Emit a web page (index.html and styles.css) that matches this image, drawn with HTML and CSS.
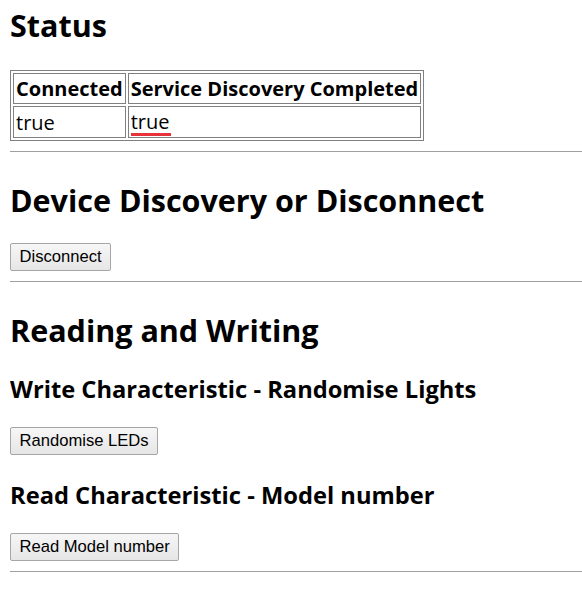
FILE: index.html
```html
<!DOCTYPE html>
<html>
<head>
<meta charset="utf-8">
<link rel="stylesheet" href="styles.css">
</head>
<body>
<h1 class="title first">Status</h1>
<table class="status">
  <tr><th>Connected</th><th>Service Discovery Completed</th></tr>
  <tr><td>true</td><td><span class="spell">true</span></td></tr>
</table>
<hr class="rule">
<h1 class="title">Device Discovery or Disconnect</h1>
<div class="actions"><button class="btn">Disconnect</button></div>
<hr class="rule">
<h1 class="title">Reading and Writing</h1>
<h2 class="sub">Write Characteristic - Randomise Lights</h2>
<div class="actions"><button class="btn">Randomise LEDs</button></div>
<h2 class="sub">Read Characteristic - Model number</h2>
<div class="actions"><button class="btn">Read Model number</button></div>
<hr class="rule">
</body>
</html>
```
FILE: styles.css
```css
html, body { background: #fff; }
body {
  margin: 0 0 0 10px;
  font-family: "Open Sans", "Noto Sans", sans-serif;
  color: #000;
}
.title {
  font-size: 30.5px;
  font-weight: 700;
  line-height: 42px;
  margin: 27px 0 22px;
}
.title.first { margin-top: 4px; margin-bottom: 24px; }
.sub {
  font-size: 23.7px;
  font-weight: 700;
  line-height: 32px;
  margin: 24px 0 22px;
}
.title + .sub { margin-top: 22px; }
.status {
  border: 1px solid #808080;
  border-spacing: 2px;
  border-collapse: separate;
  font-size: 20px;
}
.status th, .status td {
  border: 1px solid #808080;
  padding: 1px 2px;
  text-align: left;
  line-height: 27px;
}
.status th { font-weight: 700; }
.spell {
  display: inline-block;
  border-bottom: 3px solid #e8313a;
  line-height: 22px;
  padding-right: 2px;
}
.rule {
  border: 0;
  border-top: 1px solid #a0a0a0;
  margin: 10px 0 0;
  height: 0;
}
.actions { margin: 0; }
.btn {
  font-family: "Liberation Sans", Arial, sans-serif;
  font-size: 16.6px;
  color: #000;
  padding: 3px 8.5px;
  border: 1px solid #a6a6a6;
  border-radius: 2px;
  background: linear-gradient(#f6f6f6, #e6e6e6);
  line-height: 20px;
}
```
